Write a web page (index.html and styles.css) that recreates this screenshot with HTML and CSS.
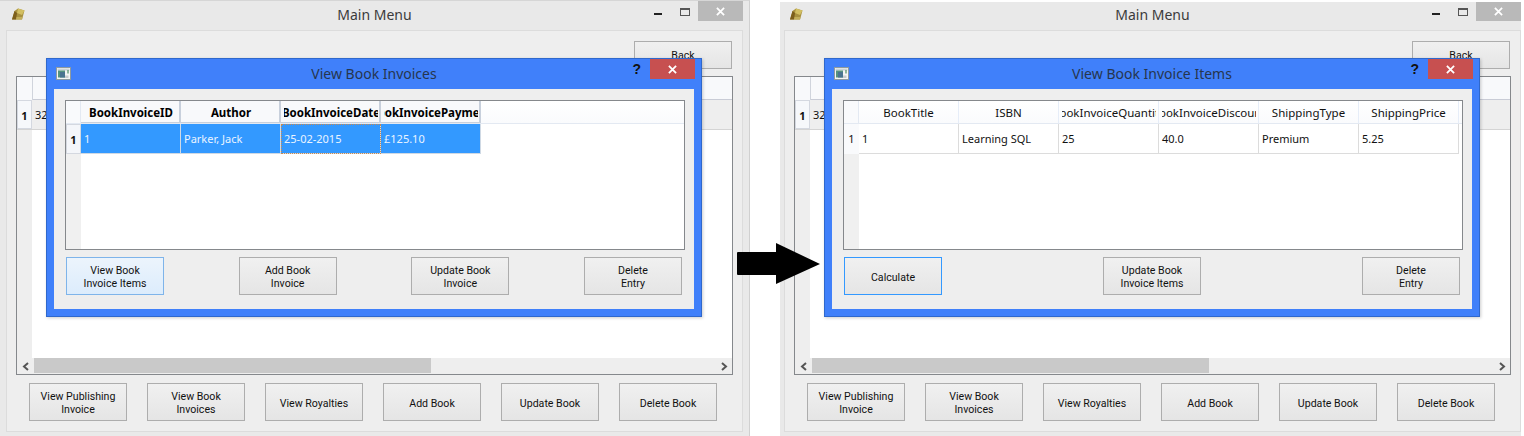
FILE: index.html
```html
<!DOCTYPE html>
<html lang="en">
<head>
<meta charset="utf-8">
<title>Book Invoices</title>
<link rel="stylesheet" href="styles.css">
</head>
<body>
<svg class="defs" width="0" height="0" aria-hidden="true">
  <symbol id="book" viewBox="0 0 14 14">
    <path d="M1 12.5 3.5 4 7 1.5l6.5 2-2.5 9z" fill="#a8913f"/>
    <path d="M7 1.5l6.5 2L11 8 6 6z" fill="#d2bf62"/>
    <path d="M1 12.5 3.5 4 6 6 5 12.5z" fill="#7d5f1c"/>
    <path d="M5 12.5h6l.6-2.500H5.500z" fill="#c2ae5a"/>
  </symbol>
  <symbol id="appicon" viewBox="0 0 15 13">
    <rect x=".5" y=".5" width="14" height="12" fill="#f4f4f4" stroke="#8e9aa0"/>
    <rect x="1.500" y="1.500" width="12" height="2" fill="#c9d2d6"/>
    <rect x="2" y="3.500" width="7" height="7" fill="#55937f"/>
    <rect x="4" y="5" width="5" height="5.500" fill="#4a7390"/>
    <rect x="11.500" y="3" width="1" height="3.500" fill="#2f7a4a"/>
    <rect x="9" y="8.500" width="3.500" height="2.500" fill="#c8cccf"/>
  </symbol>
  <symbol id="x" viewBox="0 0 10 10">
    <path d="M1 1 9 9M9 1 1 9" stroke="#fff" stroke-width="2" fill="none"/>
  </symbol>
  <symbol id="lt" viewBox="0 0 8 9">
    <path d="M6 1 2 4.500 6 8" stroke="#555" stroke-width="2" fill="none"/>
  </symbol>
  <symbol id="gt" viewBox="0 0 8 9">
    <path d="M2 1 6 4.500 2 8" stroke="#555" stroke-width="2" fill="none"/>
  </symbol>
</svg>

<main class="desktop">
  <section class="shot">
    <div class="frame">
      <header class="titlebar">
        <svg class="appmark"><use href="#book"/></svg>
        <span class="wintitle">Main Menu</span>
        <div class="winctl">
          <span class="min"></span><span class="max"></span>
          <span class="close"><svg class="xmark"><use href="#x"/></svg></span>
        </div>
      </header>
      <div class="panel">
        <div class="backrow"><button class="btn">Back</button></div>
        <div class="booktable">
          <div class="bt-head"><span class="corner"></span><span class="bt-col"></span></div>
          <div class="bt-row"><span class="rownum">1</span><span class="bt-cell">32</span></div>
          <div class="bt-body"><span class="bt-gutter"></span></div>
          <div class="hscroll">
            <span class="sb-btn"><svg class="chev"><use href="#lt"/></svg></span>
            <span class="sb-thumb"></span>
            <span class="sb-track"></span>
            <span class="sb-btn"><svg class="chev"><use href="#gt"/></svg></span>
          </div>
        </div>
        <div class="btnrow">
          <button class="btn">View Publishing<br>Invoice</button>
          <button class="btn">View Book<br>Invoices</button>
          <button class="btn">View Royalties</button>
          <button class="btn">Add Book</button>
          <button class="btn">Update Book</button>
          <button class="btn">Delete Book</button>
        </div>
      </div>
      <div class="dialog">
        <header class="dlgbar">
          <svg class="dlgicon"><use href="#appicon"/></svg>
          <span class="dlgtitle">View Book Invoices</span>
          <div class="dlgctl">
            <span class="help">?</span>
            <span class="dlgclose"><svg class="xmark"><use href="#x"/></svg></span>
          </div>
        </header>
        <div class="dlgbody">
          <div class="grid">
            <div class="g-row g-headrow">
              <span class="g-corner"></span>
              <span class="g-h g-bold"><b>BookInvoiceID</b></span>
              <span class="g-h g-bold"><b>Author</b></span>
              <span class="g-h g-bold"><b>BookInvoiceDate</b></span>
              <span class="g-h g-bold"><b>BookInvoicePayment</b></span>
            </div>
            <div class="g-row g-datarow">
              <span class="g-num g-numsel">1</span>
              <span class="g-c g-sel">1</span>
              <span class="g-c g-sel">Parker, Jack</span>
              <span class="g-c g-sel g-cur">25-02-2015</span>
              <span class="g-c g-sel">£125.10</span>
            </div>
            <div class="g-fill"><span class="g-gutter"></span></div>
          </div>
          <div class="dlgbtns">
            <button class="btn btn-hot">View Book<br>Invoice Items</button>
            <button class="btn">Add Book<br>Invoice</button>
            <button class="btn">Update Book<br>Invoice</button>
            <button class="btn">Delete<br>Entry</button>
          </div>
        </div>
      </div>
    </div>
  </section>

  <section class="shot shot-right">
    <div class="frame frame-right">
      <header class="titlebar">
        <svg class="appmark"><use href="#book"/></svg>
        <span class="wintitle">Main Menu</span>
        <div class="winctl">
          <span class="min"></span><span class="max"></span>
          <span class="close"><svg class="xmark"><use href="#x"/></svg></span>
        </div>
      </header>
      <div class="panel">
        <div class="backrow"><button class="btn">Back</button></div>
        <div class="booktable">
          <div class="bt-head"><span class="corner"></span><span class="bt-col"></span></div>
          <div class="bt-row"><span class="rownum">1</span><span class="bt-cell">32</span></div>
          <div class="bt-body"><span class="bt-gutter"></span></div>
          <div class="hscroll">
            <span class="sb-btn"><svg class="chev"><use href="#lt"/></svg></span>
            <span class="sb-thumb"></span>
            <span class="sb-track"></span>
            <span class="sb-btn"><svg class="chev"><use href="#gt"/></svg></span>
          </div>
        </div>
        <div class="btnrow">
          <button class="btn">View Publishing<br>Invoice</button>
          <button class="btn">View Book<br>Invoices</button>
          <button class="btn">View Royalties</button>
          <button class="btn">Add Book</button>
          <button class="btn">Update Book</button>
          <button class="btn">Delete Book</button>
        </div>
      </div>
      <div class="dialog">
        <header class="dlgbar">
          <svg class="dlgicon"><use href="#appicon"/></svg>
          <span class="dlgtitle">View Book Invoice Items</span>
          <div class="dlgctl">
            <span class="help">?</span>
            <span class="dlgclose"><svg class="xmark"><use href="#x"/></svg></span>
          </div>
        </header>
        <div class="dlgbody">
          <div class="grid">
            <div class="g-row g-headrow">
              <span class="g-corner"></span>
              <span class="g-h"><b class="g-plain">BookTitle</b></span>
              <span class="g-h"><b class="g-plain">ISBN</b></span>
              <span class="g-h"><b class="g-plain">BookInvoiceQuantity</b></span>
              <span class="g-h"><b class="g-plain">BookInvoiceDiscount</b></span>
              <span class="g-h"><b class="g-plain">ShippingType</b></span>
              <span class="g-h"><b class="g-plain">ShippingPrice</b></span>
            </div>
            <div class="g-row g-datarow">
              <span class="g-num">1</span>
              <span class="g-c">1</span>
              <span class="g-c">Learning SQL</span>
              <span class="g-c">25</span>
              <span class="g-c">40.0</span>
              <span class="g-c">Premium</span>
              <span class="g-c">5.25</span>
            </div>
            <div class="g-fill"><span class="g-gutter"></span></div>
          </div>
          <div class="dlgbtns">
            <button class="btn btn-focus">Calculate</button>
            <button class="btn">Update Book<br>Invoice Items</button>
            <button class="btn">Delete<br>Entry</button>
          </div>
        </div>
      </div>
    </div>
  </section>

  <svg class="arrow" viewBox="0 0 83 41" aria-hidden="true">
    <path d="M1 9H39V0L83 21 39 41V32H1a1 1 0 0 1-1-1V10a1 1 0 0 1 1-1z" fill="#000"/>
  </svg>
</main>
</body>
</html>
```
FILE: styles.css
```css
* { box-sizing: border-box; }
html, body { margin: 0; padding: 0; background: #fff; }
body { font-family: "Noto Sans", "Open Sans", sans-serif; font-size: 11px; color: #111; }
.defs { position: absolute; }

.desktop { position: relative; display: flex; width: 1524px; height: 436px; overflow: hidden; }
.shot { width: 750px; height: 436px; flex: none; }
.shot-right { width: 741px; height: 434px; margin: 2px 0 0 30px; overflow: hidden; }

.frame { position: relative; width: 750px; height: 436px; background: #e9e9e9; border-top: 1px solid #d6d6d6; border-right: 1px solid #d0d0d0; }
.frame-right { margin: -2px 0 0 -2px; }

.titlebar { display: flex; align-items: center; height: 29px; padding-left: 11px; position: relative; }
.appmark { width: 14px; height: 14px; margin-top: -3px; }
.wintitle { position: absolute; left: 0; right: 0; top: 4px; text-align: center; font-size: 14px; line-height: 20px; color: #3b3b3b; }
.winctl { position: absolute; top: 0; left: 654px; width: 89px; height: 19px; }
.min { position: absolute; left: 0; top: 12px; width: 8px; height: 2px; background: #222; }
.max { position: absolute; left: 26px; top: 7px; width: 10px; height: 8px; border: 1px solid #555; border-top-width: 2px; }
.close { position: absolute; left: 44px; top: 0; width: 45px; height: 20px; background: #b9b9b9; display: flex; align-items: center; justify-content: center; }
.xmark { width: 9px; height: 9px; }

.panel { width: 737px; height: 402px; background: #eee; border: 1px solid #dcdcdc; padding: 10px 9px 0; margin-left: 6px; }
.backrow { display: flex; justify-content: flex-end; margin-right: 1px; }

.btn { width: 98px; height: 38px; padding: 2px 0 0; border: 1px solid #adadad; background: linear-gradient(#f0f0f0, #e5e5e5); font-family: Roboto, "Noto Sans", sans-serif; font-size: 10.600px; line-height: 13px; color: #111; text-align: center; flex: none; }
.backrow .btn { height: 28px; padding-top: 0; }
.btn-hot { background: linear-gradient(#ecf4fc, #dcecfc); border-color: #7eb4ea; }
.btn-focus { border-color: #3399ff; }

.booktable { display: flex; flex-direction: column; width: 717px; height: 299px; margin-top: 7px; border: 1px solid #85888c; background: #fff; }
.bt-head { display: flex; height: 23px; flex: none; }
.corner { width: 16px; background: #f8f9fb; border-right: 1px solid #d0d4dc; }
.bt-col { flex: 1; background: #f8f9fb; border-bottom: 1px solid #c9ccd6; }
.bt-row { display: flex; height: 30px; flex: none; background: #eee; border-bottom: 1px solid #d4d4d4; }
.rownum { width: 15px; font-weight: 700; text-align: center; line-height: 29px; background: #f6f8fb; border: 1px solid #d4d8e0; }
.bt-cell { flex: 1; padding-left: 3px; line-height: 30px; }
.bt-body { display: flex; flex: 1; }
.bt-gutter { width: 15px; background: #eee; }
.hscroll { display: flex; height: 16px; flex: none; background: #eee; }
.sb-btn { width: 17px; display: flex; align-items: center; justify-content: center; flex: none; }
.chev { width: 8px; height: 9px; }
.sb-thumb { width: 397px; background: #c9c9c9; margin-bottom: 1px; }
.sb-track { flex: 1; }

.btnrow { display: flex; gap: 20px; margin: 8px 0 0 13px; }

.dialog { position: absolute; left: 46px; top: 57px; width: 656px; height: 259px; background: #4080fa; border: 1px solid #2f68cc; box-shadow: 1px 1px 3px rgba(0,0,0,.2); padding: 0 7px 7px; }
.dlgbar { position: relative; display: flex; align-items: center; height: 30px; }
.dlgicon { position: absolute; left: 2px; top: 8px; width: 15px; height: 13px; }
.dlgtitle { flex: 1; text-align: center; font-size: 14px; line-height: 20px; color: #26364e; margin-top: -1px; }
.dlgctl { position: absolute; top: 0; right: -1px; display: flex; align-items: flex-start; gap: 9px; }
.help { font: 700 14px/20px "Liberation Sans", sans-serif; color: #111; }
.dlgclose { width: 45px; height: 20px; background: #c75050; display: flex; align-items: center; justify-content: center; }

.dlgbody { height: 220px; background: #eee; padding: 11px 12px 0 11px; }
.grid { display: flex; flex-direction: column; width: 620px; height: 150px; border: 1px solid #85888c; background: #fff; }
.g-row { display: flex; flex: none; }
.g-headrow { height: 23px; background: linear-gradient(#fff, #fafbfd); border-bottom: 1px solid #e3e9f2; }
.g-corner { width: 15px; background: #f9fafc; border-right: 1px solid #e3e9f2; }
.g-h { width: 100px; flex: none; display: flex; justify-content: center; align-items: center; white-space: nowrap; padding-top: 1px; font-size: 11.500px; border-right: 1px solid #e6edf8; }
.g-h b { display: flex; justify-content: center; flex: none; width: 94px; overflow: hidden; color: #000; }
.g-h .g-plain { font-weight: 400; color: #111; }
.g-bold { background: #f8f9fb; padding-left: 2px; border-right: 2px solid #c8d0dc; border-bottom: 1px solid #c8d0dc; }
.g-datarow { height: 30px; }
.g-num { width: 15px; text-align: center; line-height: 29px; background: #f9fafc; }
.g-numsel { font-weight: 700; background: #f4f6fa; border: 1px solid #d4d8e0; }
.g-c { width: 100px; padding-left: 3px; line-height: 30px; border-right: 1px solid #dcdcdc; border-bottom: 1px solid #dcdcdc; white-space: nowrap; }
.g-sel { background: #3399ff; color: #eaf4ff; border-right-color: #cfd9e4; border-bottom-color: #cfd9e4; }
.g-cur { outline: 1px dotted #c98a50; outline-offset: -1px; }
.g-fill { display: flex; flex: 1; }
.g-gutter { width: 15px; background: #f0f0f0; }
.dlgbtns { display: flex; justify-content: space-between; margin: 7px 0 0 1px; width: 616px; }

.arrow { position: absolute; left: 737px; top: 243px; width: 83px; height: 41px; }
```
